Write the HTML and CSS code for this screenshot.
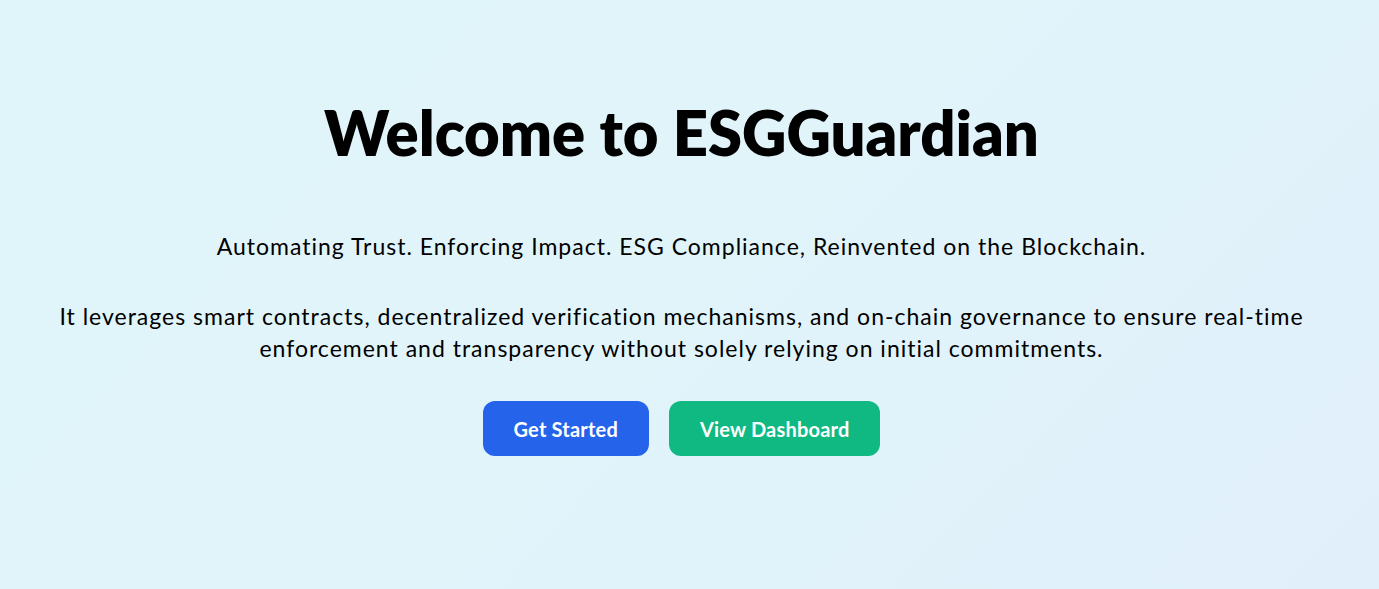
FILE: index.html
```html
<!DOCTYPE html>
<html lang="en">
<head>
<meta charset="utf-8">
<title>ESGGuardian</title>
<link rel="stylesheet" href="styles.css">
</head>
<body>
<main class="hero">
  <h1 class="hero-title">Welcome to ESGGuardian</h1>
  <p class="hero-tagline">Automating Trust. Enforcing Impact. ESG Compliance, Reinvented on the Blockchain.</p>
  <p class="hero-text">It leverages smart contracts, decentralized verification mechanisms, and on-chain governance to ensure real-time enforcement and transparency without solely relying on initial commitments.</p>
  <div class="hero-actions">
    <a class="btn btn-blue" href="#">Get Started</a>
    <a class="btn btn-green" href="#">View Dashboard</a>
  </div>
</main>
</body>
</html>
```

FILE: styles.css
```css
html, body {
  margin: 0;
  padding: 0;
}
body {
  min-height: 589px;
  background: linear-gradient(135deg, #e0f5fa 0%, #e0f4fa 50%, #e1effb 100%);
  font-family: "Lato", "Noto Sans", sans-serif;
  color: #000;
}
.hero {
  display: flex;
  flex-direction: column;
  align-items: center;
  text-align: center;
  padding: 96px 56px 0 40px;
}
.hero-title {
  margin: 0;
  font-size: 61.5px;
  line-height: 72px;
  font-weight: 800;
  color: #000;
}
.hero-tagline {
  margin: 62px 0 0;
  font-size: 23px;
  line-height: 32px;
  letter-spacing: 1px;
}
.hero-text {
  margin: 38px 0 0;
  max-width: 1275px;
  font-size: 23px;
  line-height: 32px;
  letter-spacing: 1px;
}
.hero-actions {
  display: flex;
  gap: 20px;
  margin-top: 37px;
}
.btn {
  display: flex;
  align-items: center;
  justify-content: center;
  height: 55px;
  padding: 0 31px;
  border-radius: 12px;
  color: #fff;
  font-size: 20px;
  font-weight: 700;
  letter-spacing: 0.2px;
  text-decoration: none;
}
.btn-blue { background: #2563eb; }
.btn-green { background: #10b981; }
```
